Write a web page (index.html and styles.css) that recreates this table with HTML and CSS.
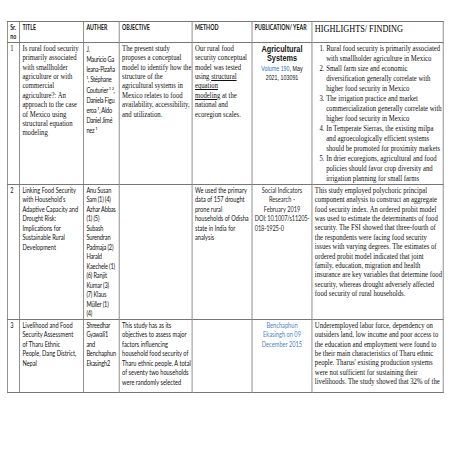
FILE: index.html
```html
<!DOCTYPE html>
<html>
<head>
<meta charset="utf-8">
<link rel="stylesheet" href="styles.css">
</head>
<body>
<div class="page">
<table class="sheet">
  <colgroup>
    <col class="c-no"><col class="c-title"><col class="c-auth"><col class="c-obj"><col class="c-meth"><col class="c-pub"><col class="c-hl">
  </colgroup>
  <tr class="r-head">
    <td class="hd">Sr.<br>no</td>
    <td class="hd">TITLE</td>
    <td class="hd">AUTHER</td>
    <td class="hd">OBJECTIVE</td>
    <td class="hd">METHOD</td>
    <td class="hd">PUBLICATION/ YEAR</td>
    <td class="hd-big">HIGHLIGHTS/ FINDING</td>
  </tr>
  <tr class="r-1">
    <td class="serif">1</td>
    <td class="serif">Is rural food security<br>primarily associated<br>with smallholder<br>agriculture or with<br>commercial<br>agriculture?: An<br>approach to the case<br>of Mexico using<br>structural equation<br>modeling</td>
    <td class="sans auth1">J.<br>Mauricio Ga<br>leana-Pizaña<br>¹, Stéphane<br>Couturier ¹ ²,<br>Daniela Figu<br>eroa ¹, Aldo<br>Daniel Jimé<br>nez ¹</td>
    <td class="serif">The present study<br>proposes a conceptual<br>model to identify how the<br>structure of the<br>agricultural systems in<br>Mexico relates to food<br>availability, accessibility,<br>and utilization.</td>
    <td class="serif">Our rural food<br>security conceptual<br>model was tested<br>using <u>structural</u><br><u>equation</u><br><u>modeling</u> at the<br>national and<br>ecoregion scales.</td>
    <td class="pub">
      <div class="journal">Agricultural<br>Systems</div>
      <div class="vol"><span class="link">Volume 190</span>, May<br>2021, 103091</div>
    </td>
    <td class="serif">
      <ol class="hl-list">
        <li>Rural food security is primarily associated<br>with smallholder agriculture in Mexico</li>
        <li>Small farm size and economic<br>diversification generally correlate with<br>higher food security in Mexico</li>
        <li>The irrigation practice and market<br>commercialization generally correlate with<br>higher food security in Mexico</li>
        <li>In Temperate Sierras, the existing milpa<br>and agroecologically efficient systems<br>should be promoted for proximity markets</li>
        <li>In drier ecoregions, agricultural and food<br>policies should favor crop diversity and<br>irrigation planning for small farms</li>
      </ol>
    </td>
  </tr>
  <tr class="r-2">
    <td class="sans">2</td>
    <td class="sans">Linking Food Security<br>with Household's<br>Adaptive Capacity and<br>Drought Risk:<br>Implications for<br>Sustainable Rural<br>Development</td>
    <td class="sans tight">Anu Susan<br>Sam (1) (4)<br>Azhar Abbas<br>(1) (5)<br>Subash<br>Surendran<br>Padmaja (2)<br>Harald<br>Kaechele (1)<br>(6) Ranjit<br>Kumar (3)<br>(7) Klaus<br>Müller (1)<br>(4)</td>
    <td class="sans"></td>
    <td class="sans">We used the primary<br>data of 157 drought<br>prone rural<br>households of Odisha<br>state in India for<br>analysis</td>
    <td class="sans pub2">
      <div class="center">Social Indicators<br>Research -<br>February 2019</div>
      <div class="tight">DOI: 10.1007/s11205-<br>018-1925-0</div>
    </td>
    <td class="serif">This study employed polychoric principal<br>component analysis to construct an aggregate<br>food security index. An ordered probit model<br>was used to estimate the determinants of food<br>security. The FSI showed that three-fourth of<br>the respondents were facing food security<br>issues with varying degrees. The estimates of<br>ordered probit model indicated that joint<br>family, education, migration and health<br>insurance are key variables that determine food<br>security, whereas drought adversely affected<br>food security of rural households.</td>
  </tr>
  <tr class="r-3">
    <td class="sans">3</td>
    <td class="sans">Livelihood and Food<br>Security Assessment<br>of Tharu Ethnic<br>People, Dang District,<br>Nepal</td>
    <td class="sans tight">Shreedhar<br>Gyawali1<br>and<br>Benchaphun<br>Ekasingh2</td>
    <td class="sans">This study has as its<br>objectives to assess major<br>factors influencing<br>household food security of<br>Tharu ethnic people. A total<br>of seventy two households<br>were randomly selected</td>
    <td class="sans"></td>
    <td class="sans pub3">Benchaphun<br>Ekasingh on 09<br>December 2015</td>
    <td class="serif">Underemployed labor force, dependency on<br>outsiders land, low income and poor access to<br>the education and employment were found to<br>be their main characteristics of Tharu ethnic<br>people. Tharus' existing production systems<br>were not sufficient for sustaining their<br>livelihoods. The study showed that 32% of the</td>
  </tr>
</table>
</div>
</body>
</html>
```

FILE: styles.css
```css
html, body {
  margin: 0;
  padding: 0;
  background: #ffffff;
  overflow: hidden;
}

.page {
  padding: 21px 0 0 7px;
}

.sheet {
  width: 538px;
  table-layout: fixed;
  border-collapse: collapse;
  transform: scaleX(0.81);
  transform-origin: 0 0;
  color: #111111;
}

.sheet td {
  border: 1px solid #777777;
  vertical-align: top;
  padding: 1px 3px 0 3px;
  white-space: nowrap;
  overflow: hidden;
}

.c-no { width: 15px; }
.c-title { width: 79px; }
.c-auth { width: 44px; }
.c-obj { width: 90px; }
.c-meth { width: 74px; }
.c-pub { width: 74px; }
.c-hl { width: 162px; }

.r-head { height: 20px; }
.r-1 { height: 142px; }
.r-2 { height: 135px; }
.r-3 { height: 73px; }

.hd {
  font-family: Lato, "Liberation Sans", sans-serif;
  font-weight: 700;
  font-size: 6.5px;
  line-height: 9.4px;
  padding-top: 2px;
}

.hd-big {
  font-family: "Liberation Serif", serif;
  font-size: 10.2px;
  line-height: 12px;
  padding-top: 2px;
  color: #000000;
}

.serif {
  font-family: "Liberation Serif", serif;
  font-size: 8.3px;
  line-height: 9.4px;
}

.sans {
  font-family: Lato, "Liberation Sans", sans-serif;
  font-size: 7px;
  line-height: 9.5px;
}

.tight {
  letter-spacing: -0.2px;
}

.auth1 {
  font-size: 7px;
  line-height: 10.2px;
  letter-spacing: -0.3px;
}

.hl-list {
  margin: 0;
  padding: 0 0 0 14px;
  line-height: 10px;
}

.pub {
  text-align: center;
  font-family: "Liberation Sans", sans-serif;
}

.journal {
  font-weight: 700;
  font-size: 9px;
  line-height: 9.6px;
  padding-top: 1px;
}

.vol {
  font-size: 6.6px;
  line-height: 9px;
}

.link {
  color: #1f6fc4;
}

.pub2 {
  color: #2b2b2b;
}

.center {
  text-align: center;
}

.pub3 {
  text-align: center;
  color: #4a7fc0;
}
```
